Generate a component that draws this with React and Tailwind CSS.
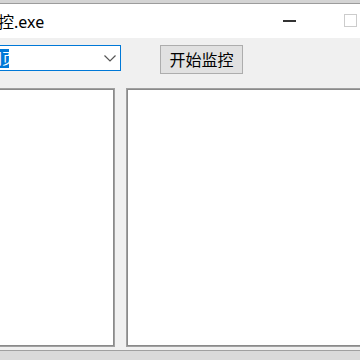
export default function App() {
  const font = { fontFamily: '"Segoe UI", "Noto Sans", "Noto Sans CJK SC", sans-serif' };
  return (
    <div className="w-[360px] h-[360px] overflow-hidden bg-[#d8d8d8] flex flex-col" style={font}>
      <div className="h-[3px] bg-[#d4d4d4] shrink-0" />
      <div className="h-px bg-[#9c9c9c] shrink-0" />
      <div className="h-[34px] bg-white flex items-center shrink-0">
        <span className="ml-[-2px] mt-[1px] text-[16px] leading-none text-black whitespace-nowrap">控.exe</span>
        <div className="flex-1" />
        <div className="w-[13px] h-[1.5px] bg-[#333333] mr-[48px]" />
        <div className="w-[13px] h-[13px] border-[1.5px] border-[#cccccc] mr-[3px] mb-[2px]" />
      </div>
      <div className="h-[312px] bg-[#f0f0f0] flex flex-col pt-[7px] pb-[3px] shrink-0">
        <div className="flex items-start h-[29px] shrink-0">
          <div className="ml-[-40px] w-[161px] h-[26px] border border-[#0078d7] bg-white flex items-center shrink-0">
            <div className="ml-[27px] h-[19px] bg-[#0078d7] text-white text-[15px] leading-[19px] flex items-center overflow-hidden w-[21px] justify-end">
              <span className="mr-[-8px] whitespace-nowrap">网页</span>
            </div>
            <div className="flex-1" />
            <svg width="12" height="7" viewBox="0 0 12 7" className="mr-[4px]">
              <polyline points="0.5,0.5 6,6 11.5,0.5" fill="none" stroke="#555555" strokeWidth="1.2" />
            </svg>
          </div>
          <button className="ml-[39px] w-[83px] h-[29px] border border-[#adadad] bg-[#e1e1e1] text-[16px] leading-none text-black flex items-center justify-center shrink-0">
            开始监控
          </button>
        </div>
        <div className="flex mt-[14px] h-[259px] shrink-0">
          <div className="ml-[-20px] w-[135px] h-full border border-[#a0a0a0] shadow-[inset_1px_1px_0_#8a8a8a,inset_-1px_-1px_0_#8a8a8a] bg-white shrink-0" />
          <div className="ml-[11px] flex-1 mr-[-20px] h-full border border-[#a0a0a0] shadow-[inset_1px_1px_0_#8a8a8a,inset_-1px_-1px_0_#8a8a8a] bg-white" />
        </div>
      </div>
      <div className="h-px bg-[#a0a0a0] shrink-0" />
      <div className="flex-1 bg-[#dadada]" />
    </div>
  );
}
